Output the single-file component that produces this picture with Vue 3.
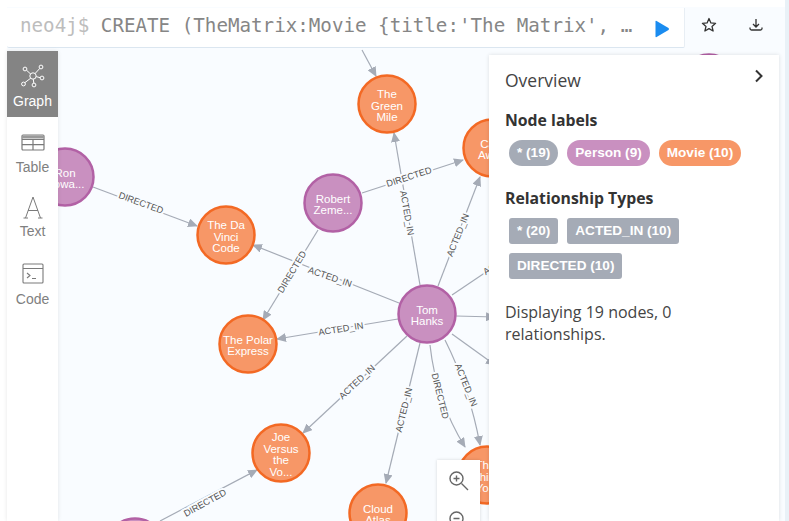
<script setup>
const edges = [
  { d: 'M362 50L376 76' },
  { d: 'M420 285L394 133', l: 'ACTED_IN', x: 407, y: 213, a: 80 },
  { d: 'M362 193L463 160', l: 'DIRECTED', x: 409, y: 177, a: -18 },
  { d: 'M438 286L480 177', l: 'ACTED_IN', x: 458, y: 235, a: -68 },
  { d: 'M399 303L253 245', l: 'ACTED_IN', x: 330, y: 277, a: 19 },
  { d: 'M398 319L277 339', l: 'ACTED_IN', x: 341, y: 329, a: -9 },
  { d: 'M318 230L263 320', l: 'DIRECTED', x: 292, y: 272, a: -59 },
  { d: 'M93 187L197 226', l: 'DIRECTED', x: 141, y: 203, a: 20 },
  { d: 'M407 336L303 433', l: 'ACTED_IN', x: 357, y: 382, a: -43 },
  { d: 'M420 343L386 483', l: 'ACTED_IN', x: 404, y: 410, a: -76 },
  { d: 'M430 345Q436 400 465 447', l: 'DIRECTED', x: 440, y: 396, a: 76 },
  { d: 'M445 340Q470 390 480 445', l: 'ACTED_IN', x: 466, y: 385, a: 68 },
  { d: 'M452 295L495 266', l: 'ACTED_IN', x: 503, y: 260, a: -34 },
  { d: 'M456 316L495 317' },
  { d: 'M452 334L495 365', l: 'ACTED_IN', x: 512, y: 378, a: 36 },
  { d: 'M160 521L257 470', l: 'DIRECTED', x: 205, y: 503, a: -29 },
]
const nodes = [
  { x: 387, y: 104, t: 'm', lines: ['The', 'Green', 'Mile'] },
  { x: 65, y: 177, t: 'p', lines: ['Ron', 'Howa...'] },
  { x: 226, y: 235, t: 'm', lines: ['The Da', 'Vinci', 'Code'] },
  { x: 333, y: 203, t: 'p', lines: ['Robert', 'Zeme...'] },
  { x: 248, y: 344, t: 'm', lines: ['The Polar', 'Express'] },
  { x: 427, y: 314, t: 'p', lines: ['Tom', 'Hanks'] },
  { x: 492, y: 148, t: 'm', lines: ['Cast', 'Away'] },
  { x: 281, y: 453, t: 'm', lines: ['Joe', 'Versus', 'the', 'Vo...'] },
  { x: 378, y: 513, t: 'm', lines: ['Cloud', 'Atlas'] },
  { x: 487, y: 475, t: 'm', lines: ['That', 'Thing', 'Yo...'] },
  { x: 135, y: 547, t: 'p', lines: [] },
  { x: 709, y: 83, t: 'p', lines: [] },
]
const lineY = (n, i) => n.y + 5.6 + (i - (n.lines.length - 1) / 2) * 11.6
const tools = ['Table', 'Text', 'Code']
const nodeLabels = [
  { text: '* (19)', kind: 'grey' },
  { text: 'Person (9)', kind: 'purple' },
  { text: 'Movie (10)', kind: 'orange' },
]
const relTypes = ['* (20)', 'ACTED_IN (10)', 'DIRECTED (10)']
</script>

<template>
  <div class="page">
    <svg class="canvas" width="789" height="521" viewBox="0 0 789 521">
      <defs>
        <marker id="arrow" markerWidth="10" markerHeight="9" refX="9" refY="4.5" orient="auto" markerUnits="userSpaceOnUse">
          <path d="M0 0L10 4.5L0 9Z" fill="#a5abb6" />
        </marker>
      </defs>
      <rect x="7" y="7" width="778" height="514" fill="#f9fcff" />
      <g v-for="(e, i) in edges" :key="i">
        <path :d="e.d" fill="none" stroke="#a5abb6" stroke-width="1.2" marker-end="url(#arrow)" />
        <text
          v-if="e.l"
          class="edge-label"
          text-anchor="middle"
          :transform="`translate(${e.x} ${e.y}) rotate(${e.a})`"
          dy="3"
        >{{ e.l }}</text>
      </g>
      <g v-for="(n, i) in nodes" :key="'n' + i">
        <circle :cx="n.x" :cy="n.y" r="28.5" :class="n.t === 'p' ? 'person' : 'movie'" />
        <text
          v-for="(line, j) in n.lines"
          :key="j"
          class="node-label"
          text-anchor="middle"
          :x="n.x"
          :y="lineY(n, j)"
        >{{ line }}</text>
      </g>
    </svg>

    <header class="top">
      <div class="editor">
        <div class="code"><span class="prompt">neo4j$</span> CREATE (TheMatrix:Movie {title:'The Matrix', …</div>
        <svg class="play" width="16" height="18" viewBox="0 0 16 18"><path d="M1.5 1.5Q1.5 .5 2.6 1L14.5 8Q15.6 9 14.5 10L2.6 17Q1.5 17.5 1.5 16.5Z" fill="#1a8cf0" /></svg>
      </div>
      <div class="actions">
        <svg width="16" height="16" viewBox="0 0 16 16"><path d="M8 1.5L9.9 5.9L14.6 6.3L11 9.4L12.1 14L8 11.6L3.9 14L5 9.4L1.4 6.3L6.1 5.9Z" fill="none" stroke="#333" stroke-width="1.3" stroke-linejoin="round" /></svg>
        <svg width="16" height="16" viewBox="0 0 16 16"><path d="M8 2V9.5M5 7L8 10L11 7M2 10.5V11.5Q2 13 3.5 13H12.5Q14 13 14 11.5V10.5" fill="none" stroke="#333" stroke-width="1.3" /></svg>
      </div>
    </header>

    <main class="body">
      <nav class="rail">
        <div class="tool active">
          <svg width="26" height="26" viewBox="0 0 26 26" fill="none" stroke="#fff" stroke-width="1">
            <circle cx="13" cy="13" r="3.2" />
            <circle cx="5" cy="6" r="1.9" />
            <circle cx="21" cy="4" r="1.9" />
            <circle cx="22" cy="15" r="1.9" />
            <circle cx="14" cy="22" r="1.9" />
            <circle cx="3.5" cy="21" r="1.9" />
            <path d="M6.5 7.2L10.6 11M19.8 5.4L15 10.6M20.2 14.7L16.2 13.6M13.8 20.2L13.3 16.2M4.8 19.7L10.7 15.2" />
          </svg>
          <span>Graph</span>
        </div>
        <div v-for="name in tools" :key="name" class="tool" :class="{ tight: name === 'Text' }">
          <svg v-if="name === 'Table'" width="26" height="26" viewBox="0 0 26 26" fill="none" stroke="#7a7a7a" stroke-width="1.2">
            <rect x="2" y="6" width="22" height="15" rx="1" />
            <path d="M2 10.5H24M2 15.7H24M13 10.5V21" />
            <path d="M2 8H24" stroke-width="3" stroke="#9a9a9a" />
          </svg>
          <svg v-else-if="name === 'Text'" width="26" height="26" viewBox="0 0 26 26" fill="none" stroke="#7a7a7a" stroke-width="1">
            <path d="M5.5 23L13 2L20.5 23M8 15.5H18M3.5 23H8M18 23H22.5" />
          </svg>
          <svg v-else width="26" height="26" viewBox="0 0 26 26" fill="none" stroke="#7a7a7a" stroke-width="1.1">
            <rect x="3" y="3" width="20" height="19" rx="1" />
            <path d="M3 7.5H23M7 12L10 14.5L7 17M12 17.5H16" />
          </svg>
          <span>{{ name }}</span>
        </div>
      </nav>

      <aside class="panel">
        <div class="panel-head">
          <span class="overview">Overview</span>
          <svg class="chev" width="10" height="14" viewBox="0 0 10 14"><path d="M2 1.5L7.5 7L2 12.5" fill="none" stroke="#333" stroke-width="2" /></svg>
        </div>
        <h3>Node labels</h3>
        <div class="chips">
          <span v-for="c in nodeLabels" :key="c.text" class="chip pill" :class="c.kind">{{ c.text }}</span>
        </div>
        <h3 class="second">Relationship Types</h3>
        <div class="chips rel">
          <span v-for="c in relTypes" :key="c" class="chip rect">{{ c }}</span>
        </div>
        <p class="summary">Displaying 19 nodes, 0 relationships.</p>
      </aside>
    </main>

    <div class="zoom">
      <svg width="22" height="22" viewBox="0 0 22 22" fill="none" stroke="#666" stroke-width="1.4">
        <circle cx="8.5" cy="8.5" r="6.5" />
        <path d="M8.5 5.5V11.5M5.5 8.5H11.5M13.5 13.5L20 20" />
      </svg>
      <svg width="22" height="22" viewBox="0 0 22 22" fill="none" stroke="#666" stroke-width="1.4">
        <circle cx="8.5" cy="8.5" r="6.5" />
        <path d="M5.5 8.5H11.5M13.5 13.5L20 20" />
      </svg>
    </div>
  </div>
</template>

<style>
html, body { margin: 0; padding: 0; overflow: hidden; }
</style>

<style scoped>
.page {
  position: relative;
  width: 789px;
  height: 521px;
  overflow: hidden;
  background: #fff;
  display: flex;
  flex-direction: column;
  font-family: "Liberation Sans", Arial, sans-serif;
}
.page::after {
  content: "";
  position: absolute;
  top: 0;
  right: 0;
  width: 4px;
  height: 521px;
  background: #e9f1f7;
}
.canvas { position: absolute; left: 0; top: 0; }
.person { fill: #c990c0; stroke: #b261a5; stroke-width: 2.5; }
.movie { fill: #f79767; stroke: #f36924; stroke-width: 2.5; }
.node-label { font-size: 11.5px; fill: #fff; font-family: "Liberation Sans", Arial, sans-serif; }
.edge-label {
  font-size: 9.2px;
  fill: #555;
  font-family: "Liberation Sans", Arial, sans-serif;
  stroke: #f9fcff;
  stroke-width: 4px;
  paint-order: stroke;
}
.top {
  position: relative;
  display: flex;
  padding: 8px 0 0 7px;
  height: 48px;
  box-sizing: border-box;
  flex: none;
}
.editor {
  width: 678px;
  height: 40px;
  box-sizing: border-box;
  background: #fff;
  border-bottom: 1px solid #dbe6f0;
  border-right: 1px solid #e8eef4;
  border-radius: 0 0 2px 2px;
  display: flex;
  align-items: center;
  padding: 0 14px 0 13px;
  justify-content: space-between;
}
.code {
  font-family: "DejaVu Sans Mono", monospace;
  font-size: 19.2px;
  color: #868686;
  white-space: pre;
  line-height: 34px;
  margin-top: -4px;
}
.prompt { color: #bdbdbd; }
.play { margin-top: 2px; }
.actions {
  display: flex;
  gap: 31px;
  padding: 9px 0 0 16px;
  align-items: flex-start;
}
.body {
  position: relative;
  flex: 1;
  display: flex;
  justify-content: space-between;
  padding: 3px 10px 0 7px;
  min-height: 0;
}
.rail {
  width: 51px;
  background: #fff;
  box-shadow: 0 0 4px rgba(0, 0, 0, .1);
  display: flex;
  flex-direction: column;
}
.tool {
  height: 66px;
  flex: none;
  display: flex;
  flex-direction: column;
  align-items: center;
  padding-top: 12px;
  box-sizing: border-box;
  color: #808080;
  font-size: 14px;
  line-height: 16px;
  gap: 4px;
}
.tool.tight { gap: 2px; }
.tool span { display: block; }
.tool.active { background: #848484; color: #fff; }
.panel {
  width: 290px;
  margin-top: 4px;
  background: #fff;
  box-shadow: 0 0 4px rgba(0, 0, 0, .12);
  padding: 13px 16px 0 16px;
  box-sizing: border-box;
  font-family: "Open Sans", sans-serif;
  color: #333;
}
.panel-head { display: flex; justify-content: space-between; align-items: flex-start; height: 24px; }
.overview { font-size: 17.5px; line-height: 24px; color: #444; }
.chev { margin: 1px -1px 0 0; }
h3 { margin: 17px 0 0; font-size: 15.8px; line-height: 22px; font-weight: 700; color: #333; }
h3.second { margin-top: 21px; }
.chips {
  display: flex;
  flex-wrap: wrap;
  gap: 9px;
  margin: 9px 0 0 4px;
  width: 260px;
}
.chips.rel { margin-top: 9px; }
.chip {
  font-family: "Liberation Sans", Arial, sans-serif;
  font-weight: 700;
  font-size: 13.6px;
  color: #fff;
  height: 26px;
  line-height: 25px;
  padding: 0 8px;
  box-sizing: border-box;
  white-space: nowrap;
}
.pill { border-radius: 13px; }
.rect { border-radius: 3px; background: #a5abb6; }
.grey { background: #a5abb6; }
.purple { background: #c990c0; }
.orange { background: #f79767; }
.summary { margin: 22px 0 0; font-size: 16px; line-height: 22px; color: #444; }
.zoom {
  position: absolute;
  left: 437px;
  top: 460px;
  width: 43px;
  height: 100px;
  background: #fff;
  box-shadow: 0 0 3px rgba(0, 0, 0, .15);
  display: flex;
  flex-direction: column;
  align-items: center;
  gap: 17.5px;
  padding: 10px 0 0;
  box-sizing: border-box;
}
.zoom svg { flex: none; }
</style>
